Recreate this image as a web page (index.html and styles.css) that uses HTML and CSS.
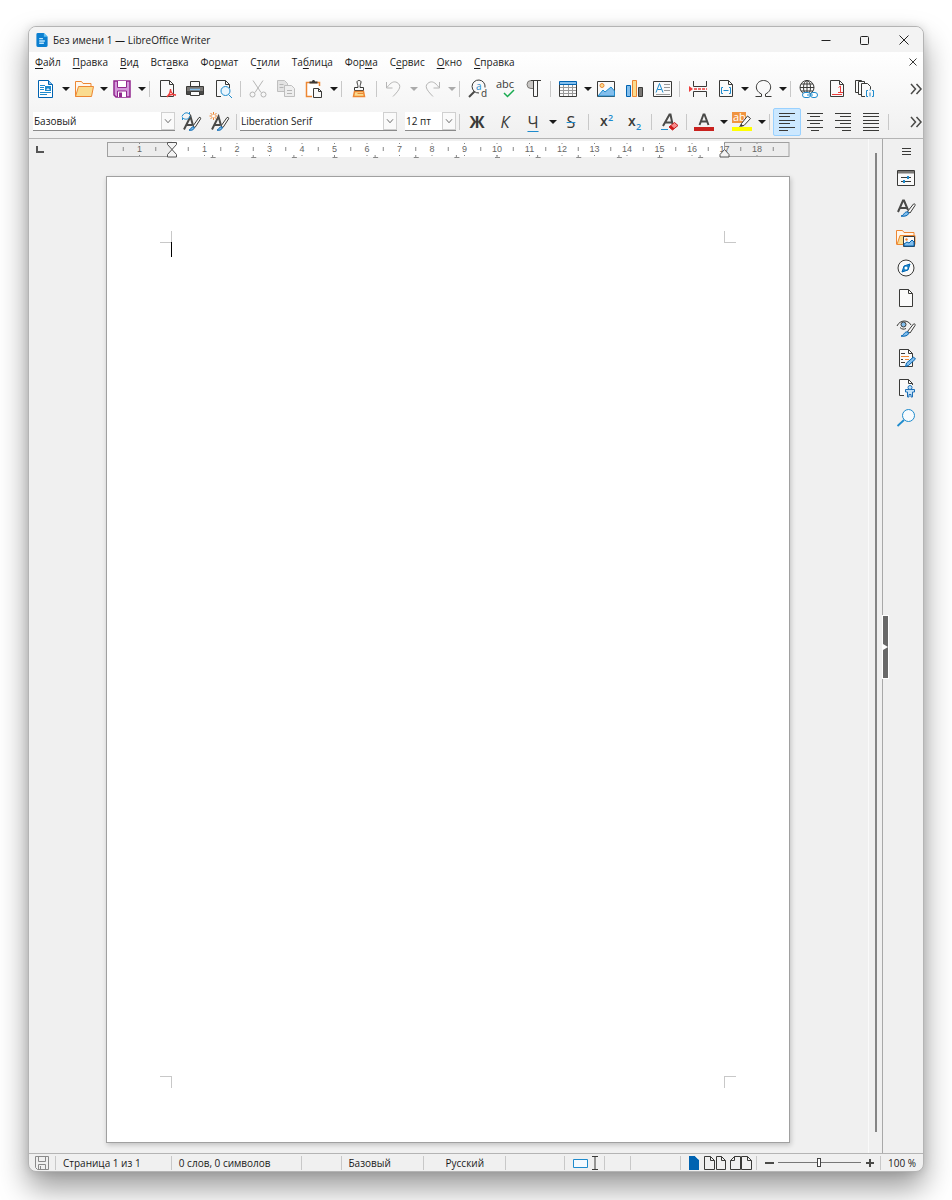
FILE: index.html
```html
<!DOCTYPE html>
<html lang="ru">

<head>
    <meta charset="UTF-8">
    <meta name="viewport" content="width=device-width, initial-scale=1.0">
    <title>Без имени 1 — LibreOffice Writer</title>
    <link rel="stylesheet" href="styles.css">
</head>

<body>
    <div class="window">
        <header class="titlebar">
            <svg class="app-icon" viewBox="0 0 12 15"><path d="M1.500 0H8l4 4v9.500a1.500 1.500 0 0 1-1.500 1.500h-9A1.500 1.500 0 0 1 0 13.500v-12A1.500 1.500 0 0 1 1.500 0z" fill="#0b7fd0"/><path d="M8 0v4h4z" fill="#5cc0f5"/><path d="M3 6h4M3 8.500h6M3 11h5" stroke="#bfe6fc" stroke-width="1.500"/></svg>
            <h1>Без имени 1 — LibreOffice Writer</h1>
            <button class="win-btn" aria-label="Свернуть"><svg viewBox="0 0 20 20"><path class="w" d="M5.500 10.500h9"/></svg></button>
            <button class="win-btn" aria-label="Развернуть"><svg viewBox="0 0 20 20"><rect class="w" x="5.500" y="6.500" width="8" height="8" rx="1"/></svg></button>
            <button class="win-btn" aria-label="Закрыть"><svg viewBox="0 0 20 20"><path class="w" d="M5.500 5.500l9 9m0-9l-9 9"/></svg></button>
        </header>

        <div class="bars">
            <nav class="menu">
                <a href="#"><u>Ф</u>айл</a>
                <a href="#"><u>П</u>равка</a>
                <a href="#"><u>В</u>ид</a>
                <a href="#">Вст<u>а</u>вка</a>
                <a href="#">Фо<u>р</u>мат</a>
                <a href="#">С<u>т</u>или</a>
                <a href="#">Та<u>б</u>лица</a>
                <a href="#">Фор<u>м</u>а</a>
                <a href="#">С<u>е</u>рвис</a>
                <a href="#"><u>О</u>кно</a>
                <a href="#"><u>С</u>правка</a>
                <button class="doc-close" aria-label="Закрыть документ"><svg viewBox="0 0 20 20"><path class="k" d="M6.500 6.500l7 7m0-7l-7 7"/></svg></button>
            </nav>

            <!-- Стандартная панель -->
            <div class="toolbar">
                <button class="tool" aria-label="Создать"><svg viewBox="0 0 20 20"><path d="M2.500 1.500h10l4 4v13h-14z" fill="#fff" stroke="#0063b1"/><path d="M12.500 1.500v4h4" fill="#83beec" stroke="#0063b1"/><path d="M4 6.500h5M4 8.500h4M4 10.500h4M4 13.500h11M4 15.500h7" stroke="#1e8bcd"/><path d="M9 7h6v5H9z" fill="#1e8bcd"/><path d="M10 11l2-2 2 2z" fill="#cfe8fa"/></svg></button><button class="arrow" aria-label="Шаблоны"></button>
                <button class="tool" aria-label="Открыть"><svg viewBox="0 0 20 20"><path d="M1.500 17.500v-15h6l1.500 2h8v3" fill="#fff7ec" stroke="#ed8733"/><path d="M1.500 17.500l3-10h15l-2 10z" fill="#fadc90" stroke="#ed8733"/></svg></button><button class="arrow" aria-label="Последние документы"></button>
                <button class="tool" aria-label="Сохранить"><svg viewBox="0 0 20 20"><path d="M2 2h16v16H4l-2-2z" fill="#d59adb" stroke="#92278f" stroke-width="1.500"/><path d="M5.500 2v6.500h9V2" fill="#fff" stroke="#92278f"/><path d="M5.500 18v-6h9v6" fill="#fff" stroke="#92278f"/><path d="M7 13.500h3V18H7z" fill="#92278f"/></svg></button><button class="arrow" aria-label="Варианты сохранения"></button>
                <span class="sep"></span>
                <button class="tool" aria-label="Экспорт в PDF"><svg viewBox="0 0 20 20"><path class="p" d="M3.500 1.500h9l4 4v12h-13z"/><path class="k" d="M12.500 1.500v4h4"/><path d="M10 18c2-2 3.500-5 3.500-7.500M13.500 10c0 3 2 5.500 5.500 6.500M10 17.500c2-2 5-2.500 9-1.500" fill="none" stroke="#ed3d3b" stroke-width="1.300"/></svg></button>
                <button class="tool" aria-label="Печать"><svg viewBox="0 0 20 20"><path class="p" d="M5.500 8v-5.500h9V8"/><path d="M1.500 7.500h17v8h-17z" fill="#797774" stroke="#3a3a38"/><path d="M2 12h16v3H2z" fill="#4a4a48"/><path d="M5 10.500h10" stroke="#83beec" stroke-width="1.500"/><path class="p" d="M5.500 12.500h9v4h-9z"/></svg></button>
                <button class="tool" aria-label="Предварительный просмотр"><svg viewBox="0 0 20 20"><path class="p" d="M8 17.500H3.500v-16h9l4 4V9"/><path class="k" d="M12.500 1.500v4h4"/><circle cx="12.500" cy="12" r="4.500" fill="#e9f5fd" stroke="#1e8bcd"/><path class="b" d="M15.500 15.500l3.500 3.500"/></svg></button>
                <span class="sep"></span>
                <button class="tool" disabled aria-label="Вырезать"><svg viewBox="0 0 20 20"><path class="k" d="M5 1.500l8 12M15 1.500l-8 12"/><circle class="k" cx="4.500" cy="15.500" r="2.500"/><circle class="k" cx="15.500" cy="15.500" r="2.500"/></svg></button>
                <button class="tool" disabled aria-label="Копировать"><svg viewBox="0 0 20 20"><path d="M1.500 1.500h7l3 3v8h-10z" fill="#bbb" stroke="#555"/><path d="M8.500 6.500h7l3 3v8h-10z" fill="#ddd" stroke="#555"/><path class="k" d="M3.500 5.500h4M3.500 8.500h4M11 11.500h5M11 14.500h5"/></svg></button>
                <button class="tool" aria-label="Вставить"><svg viewBox="0 0 20 20"><path d="M8 17.500H2.500v-14h13V7" fill="#fff" stroke="#ed8733" stroke-width="1.500"/><path d="M5.500 4.500v-2H8c0-2 3-2 3 0h2.500v2z" fill="#3a3a38"/><path class="p" d="M9.500 9.500h5l3 3v6h-8z"/><path class="k" d="M14.500 9.500v3h3"/></svg></button><button class="arrow" aria-label="Варианты вставки"></button>
                <span class="sep"></span>
                <button class="tool" aria-label="Копировать формат"><svg viewBox="0 0 20 20"><path class="p" d="M9 8.500c0-3-1-4-1-5.500 0-2 4-2 4 0 0 1.500-1 2.500-1 5.500h3.500v3h-9v-3z"/><path d="M5.500 12.500h9l1 5h-11z" fill="#fadc90" stroke="#ed8733" stroke-width="1.500"/><path d="M8.500 14.500h6" stroke="#ed8733"/></svg></button>
                <span class="sep"></span>
                <button class="tool" disabled aria-label="Отменить"><svg viewBox="0 0 20 20"><path class="k" d="M2.500 3v6h6M3 8.500C7 3 10 2 13 3.500c5 3 3 7-4 14"/></svg></button><button class="arrow" disabled aria-label="История отмены"></button>
                <button class="tool" disabled aria-label="Вернуть"><svg viewBox="0 0 20 20"><path class="k" d="M17.500 3v6h-6M17 8.500C13 3 10 2 7 3.500c-5 3-3 7 4 14"/></svg></button><button class="arrow" disabled aria-label="История возврата"></button>
                <span class="sep"></span>
                <button class="tool" aria-label="Найти и заменить"><svg viewBox="0 0 20 20"><path class="k" d="M18 8.500A6.500 6.500 0 1 0 12 14"/><path class="k2" d="M7.500 12.500l-5.500 5.500"/><text x="9" y="11" class="g blue" font-size="10">a</text><text x="14" y="18" class="g" font-size="10">d</text></svg></button>
                <button class="tool" aria-label="Орфография"><svg viewBox="0 0 20 20"><text x="1" y="9" class="g" font-size="11">abc</text><path d="M9 14l3.500 3.500L19 11" fill="none" stroke="#18ab50" stroke-width="1.500"/></svg></button>
                <button class="tool" aria-label="Непечатаемые символы"><svg viewBox="0 0 20 20"><path d="M10.500 1.500H8a4 4 0 0 0 0 8h2.500z" fill="#c8c6c4" stroke="#797774"/><path class="k" d="M8 1.500h10M10.500 1.500v16M14.500 1.500v16M10.500 17.500h4"/></svg></button>
                <span class="sep"></span>
                <button class="tool" aria-label="Вставить таблицу"><svg viewBox="0 0 20 20"><path fill="#fafafa" d="M1 2h18v16H1z"/><path class="t" d="M2 8.500h16M2 11.500h16M2 14.500h16M5.500 5v12M10.500 5v12M14.500 5v12"/><path class="k" d="M1.500 5v12.500h17V5"/><path d="M1.500 2.500h17v3h-17z" fill="#83beec" stroke="#0063b1"/></svg></button><button class="arrow" aria-label="Размер таблицы"></button>
                <button class="tool" aria-label="Изображение"><svg viewBox="0 0 20 20"><path class="p" d="M1.500 2.500h17v15h-17z"/><circle cx="6" cy="6.500" r="2" fill="#fadc90" stroke="#ed8733"/><path d="M2 17l5-6 2 2 6-5 3.500 4v5H2z" fill="#83beec" stroke="#1e8bcd"/></svg></button>
                <button class="tool" aria-label="Диаграмма"><svg viewBox="0 0 20 20"><path d="M2.500 6.500h4v11h-4z" fill="#83beec" stroke="#0063b1"/><path d="M8.500 1.500h4v16h-4z" fill="#fadc90" stroke="#ed8733"/><path d="M14.500 8.500h4v9h-4z" fill="#797774" stroke="#3a3a38"/></svg></button>
                <button class="tool" aria-label="Врезка"><svg viewBox="0 0 20 20"><path class="p" d="M1.500 2.500h18v15h-18z"/><path class="b" d="M4 13.500l3.500-9 3.500 9M5.500 10.500h4"/><path class="t" d="M12 5.500h6M12 8.500h6M12 11.500h6M4 15.500h14"/></svg></button>
                <span class="sep"></span>
                <button class="tool" aria-label="Разрыв страницы"><svg viewBox="0 0 20 20"><path class="k" d="M6.500 2v5.500h13V2M6.500 18v-5.500h13V18"/><path d="M7 10h13" stroke="#ed3d3b" stroke-width="1.500" stroke-dasharray="3 1"/><path d="M2 7l4 3-4 3z" fill="#ed3d3b"/></svg></button>
                <button class="tool" aria-label="Поле"><svg viewBox="0 0 20 20"><path class="p" d="M4.500 1.500h9l4 4v12h-13z"/><path class="k" d="M13.500 1.500v4h4"/><path class="b" d="M8 8.500H6.500v6H8M14 8.500h1.500v6H14M8.500 11.500h5"/></svg></button><button class="arrow" aria-label="Виды полей"></button>
                <button class="tool" aria-label="Специальные символы"><svg viewBox="0 0 20 20"><path class="k" d="M2.500 17.500h6v-2.500C0 11 3 1.500 10.500 1.500S21 11 12.500 15v2.500h6"/></svg></button><button class="arrow" aria-label="Избранные символы"></button>
                <span class="sep"></span>
                <button class="tool" aria-label="Гиперссылка"><svg viewBox="0 0 20 20"><circle class="p" cx="9" cy="8.500" r="7"/><ellipse class="k" cx="9" cy="8.500" rx="3.500" ry="7"/><path class="k" d="M9 1.500v14M2 8.500h14M3 5h12M3 12h12"/><rect x="4.500" y="13.500" width="8" height="5" rx="2.500" fill="#fff" stroke="#1e8bcd"/><rect x="12.500" y="13.500" width="7" height="5" rx="2.500" fill="#fff" stroke="#1e8bcd"/><path class="b" d="M9 16h6"/></svg></button>
                <button class="tool" aria-label="Сноска"><svg viewBox="0 0 20 20"><path class="p" d="M4.500 1.500h9l4 4v12h-13z"/><path class="k" d="M13.500 1.500v4h4"/><path d="M6 15.500h10M14.500 7v6.500M12.500 8.500l2-1.500M12 13.500h5" fill="none" stroke="#ed3d3b"/></svg></button>
                <button class="tool" aria-label="Указатель"><svg viewBox="0 0 20 20"><path class="p" d="M1.500 13.500v-12h6v12z"/><path class="p" d="M4.500 15.500v-13h6v13z"/><path class="p" d="M11 17.500H7.500v-13h6l3 3v3"/><path class="b" d="M14 11.500h-1.500v6H14M18 11.500h1.500v6H18M16 13.500v4M16 10.500v1"/></svg></button>
                <button class="more" aria-label="Ещё"><svg viewBox="3 3 14 14"><path class="k2" d="M5 5l4.500 5L5 15M10.500 5l4.500 5-4.500 5"/></svg></button>
            </div>

            <!-- Панель форматирования -->
            <div class="toolbar format">
                <div class="combo combo-style">
                    <select aria-label="Стиль абзаца"><option>Базовый</option></select>
                    <svg viewBox="0 0 14 18"><path d="M3.500 7l3.500 4 3.500-4"/></svg>
                </div>
                <button class="tool" aria-label="Обновить стиль"><svg viewBox="0 0 20 20"><path class="k2" d="M3 17.500l6.500-13 2.500 9M5.500 13h6"/><path class="p" d="M12 14l6-8.500c1.500-.5 2 .5 1.500 1.500L14 15.500z"/><path d="M8 18c2 0 2-4 5-3 1 2-2 4-5 3z" fill="#83beec" stroke="#0063b1"/><path class="b" d="M1 4.500C3 0 7 0 8.500 2.500V0M9 4c-1 4-6 4-7.500 1.500V8"/></svg></button>
                <button class="tool" aria-label="Создать стиль"><svg viewBox="0 0 20 20"><path class="k2" d="M3 17.500l6.500-13 2.500 9M5.500 13h6"/><path class="p" d="M12 14l6-8.500c1.500-.5 2 .5 1.500 1.500L14 15.500z"/><path d="M8 18c2 0 2-4 5-3 1 2-2 4-5 3z" fill="#83beec" stroke="#0063b1"/><path d="M4.500 0v8M.5 4h8M1.500 1l6 6M7.500 1l-6 6" stroke="#ed8733"/><circle cx="4.500" cy="4" r="1.500" fill="#fff"/></svg></button>
                <span class="sep"></span>
                <div class="combo combo-font">
                    <select aria-label="Шрифт"><option>Liberation Serif</option></select>
                    <svg viewBox="0 0 14 18"><path d="M3.500 7l3.500 4 3.500-4"/></svg>
                </div>
                <div class="combo combo-size">
                    <select aria-label="Кегль"><option>12 пт</option></select>
                    <svg viewBox="0 0 14 18"><path d="M3.500 7l3.500 4 3.500-4"/></svg>
                </div>
                <span class="sep"></span>
                <button class="tool letter bold">Ж</button>
                <button class="tool letter italic">К</button>
                <button class="tool letter under">Ч</button><button class="arrow" aria-label="Вид подчёркивания"></button>
                <button class="tool letter strike">S</button>
                <span class="sep"></span>
                <button class="tool" aria-label="Верхний индекс"><svg viewBox="0 0 20 20"><text x="4" y="14" class="g semi" font-size="14">x</text><text x="12" y="9" class="g blue semi" font-size="9">2</text></svg></button>
                <button class="tool" aria-label="Нижний индекс"><svg viewBox="0 0 20 20"><text x="4" y="14" class="g semi" font-size="14">x</text><text x="12" y="18" class="g blue semi" font-size="9">2</text></svg></button>
                <span class="sep"></span>
                <button class="tool" aria-label="Очистить форматирование"><svg viewBox="0 0 20 20"><path class="k2" d="M4 14l6.500-11.500h1L13.500 12M6.500 10.500h6"/><path class="b" d="M2 17.500h7"/><path d="M10 15l5.500-4.500 3.500 3L13.500 18z" fill="#f78d8c" stroke="#cb1a1a"/><path d="M10 15l2-1.500 3.500 3L13.500 18z" fill="#cb1a1a"/></svg></button>
                <span class="sep"></span>
                <button class="tool" aria-label="Цвет шрифта"><svg viewBox="0 0 20 20"><path class="k2" d="M5.500 13L9.500 2.500h1l4 10.500M7 9.500h6"/><path d="M0 15h20v4H0z" fill="#c9211e"/></svg></button><button class="arrow" aria-label="Палитра шрифта"></button>
                <button class="tool" aria-label="Цвет выделения"><svg viewBox="0 0 20 20"><path d="M0 0h14v11H0z" fill="#f09440"/><text x="1" y="9" class="g white" font-size="11">ab</text><path class="p" d="M9.500 11.500l6-7.500 3 2.500-6.500 7-3 .5z"/><path d="M7 15l2-3 2.500 2z" fill="#3a3a38"/><path d="M0 15h20v4H0z" fill="#ff0"/></svg></button><button class="arrow" aria-label="Палитра выделения"></button>
                <span class="sep"></span>
                <button class="tool active" aria-label="По левому краю"><svg viewBox="0 0 20 20"><path class="k" d="M2 1.500h16M2 4.500h11M2 8.500h16M2 11.500h11M2 15.500h16M2 18.500h9"/></svg></button>
                <button class="tool" aria-label="По центру"><svg viewBox="0 0 20 20"><path class="k" d="M2 1.500h16M5 4.500h10M2 8.500h16M5 11.500h10M2 15.500h16M6 18.500h8"/></svg></button>
                <button class="tool" aria-label="По правому краю"><svg viewBox="0 0 20 20"><path class="k" d="M2 1.500h16M7 4.500h11M2 8.500h16M7 11.500h11M2 15.500h16M9 18.500h9"/></svg></button>
                <button class="tool" aria-label="По ширине"><svg viewBox="0 0 20 20"><path class="k" d="M2 1.500h16M2 4.500h16M2 8.500h16M2 11.500h16M2 15.500h16M2 18.500h16"/></svg></button>
                <span class="sep"></span>
                <button class="more" aria-label="Ещё"><svg viewBox="3 3 14 14"><path class="k2" d="M5 5l4.500 5L5 15M10.500 5l4.500 5-4.500 5"/></svg></button>
            </div>
        </div>

        <main class="workspace">
            <div class="canvas">
                <div class="ruler-row">
                    <button class="tab-kind" aria-label="Табуляция"></button>
                    <svg class="ruler" id="ruler" viewBox="0 0 683 17"></svg>
                </div>
                <div class="sheet">
                    <span class="corner tl"><i class="caret"></i></span>
                    <span class="corner tr"></span>
                    <span class="corner bl"></span>
                    <span class="corner br"></span>
                </div>
            </div>
            <div class="scrollbar"></div>
            <aside class="sidebar">
                <button class="fold" aria-label="Скрыть боковую панель"></button>
                <button class="side-menu" aria-label="Настройки боковой панели"><svg viewBox="0 0 20 20"><path class="k" d="M6 7.500h9M6 10.500h9M6 13.500h9"/></svg></button>
                <button class="side" aria-label="Свойства"><svg viewBox="0 0 20 20"><path class="p" d="M1.500 2.500h17v15h-17z"/><path d="M2 3h16v2.500H2z" fill="#797774"/><path class="k" d="M5 9.500h10M5 13.500h10"/><path d="M11 8h2v3h-2zM7 12h2v3H7z" fill="#1e8bcd"/></svg></button>
                <button class="side" aria-label="Стили"><svg viewBox="0 0 20 20"><path class="k2" d="M2 14L7 2.500h1L12 12M4 10h7"/><path class="p" d="M11.500 13.500l6-7.500c1.500-.5 2 .5 1.500 1.500L14 15z"/><path d="M5 18c3 0 3-5 7-4 2 3-3 5-7 4z" fill="#83beec" stroke="#0063b1"/></svg></button>
                <button class="side" aria-label="Галерея"><svg viewBox="0 0 20 20"><path d="M.5 16.500v-14h6l1.500 2h10v4" fill="#fff7ec" stroke="#ed8733"/><path d="M1 16.500l3-9h15v9z" fill="#fadc90" stroke="#ed8733"/><path class="p" d="M7.500 8.500h11v10h-11z"/><circle cx="10.500" cy="11.500" r="1.200" fill="#ed8733"/><path d="M8 18v-2l3-2 2 1 3-3 2 2v4z" fill="#83beec" stroke="#0063b1"/></svg></button>
                <button class="side" aria-label="Навигатор"><svg viewBox="0 0 20 20"><circle class="p" cx="10" cy="10" r="8"/><path d="M14 6l-2 6-6 2 2-6z" fill="#1e8bcd" stroke="#0063b1"/><circle cx="10" cy="10" r="1.500" fill="#fff"/></svg></button>
                <button class="side" aria-label="Страница"><svg viewBox="0 0 20 20"><path class="p" d="M3.500 1.500h9l4 4v13h-13z"/><path class="k" d="M12.500 1.500v4h4"/></svg></button>
                <button class="side" aria-label="Инспектор стилей"><svg viewBox="0 0 20 20"><path class="k" d="M1 8C4 1.500 12 1.500 15 7M4 9.500c2 2 4 2 6 1"/><circle cx="7.500" cy="6.500" r="2.500" fill="#83beec" stroke="#3a3a38"/><path class="p" d="M11.500 13.500l6-7.500c1.500-.5 2 .5 1.500 1.500L14 15z"/><path d="M5 18c3 0 3-5 7-4 2 3-3 5-7 4z" fill="#83beec" stroke="#0063b1"/></svg></button>
                <button class="side" aria-label="Управление изменениями"><svg viewBox="0 0 20 20"><path class="p" d="M3.500 1.500h9l4 4v13h-13z"/><path class="k" d="M12.500 1.500v4h4M5 5.500h4M5 11.500h2M5 14.500h4"/><path d="M5 8.500h8M9 11.500h4" stroke="#ed8733"/><path d="M9.500 18.500l1-3.500 7-6 2 2-7 6.500z" fill="#83beec" stroke="#0063b1"/></svg></button>
                <button class="side" aria-label="Доступность"><svg viewBox="0 0 20 20"><path class="p" d="M8 17.500H3.500v-16h9l4 4V7"/><path class="k" d="M12.500 1.500v4h4"/><path d="M9.500 11.500h9v2.500h-2v5H15v-2.500h-2V19h-1.500v-5h-2z" fill="#c5e2f8" stroke="#1e70b8"/><circle cx="14" cy="9.500" r="2" fill="#c5e2f8" stroke="#1e70b8"/></svg></button>
                <button class="side" aria-label="Поиск"><svg viewBox="0 0 20 20"><circle cx="12.500" cy="7.500" r="6" fill="#f7fbfe" stroke="#1e8bcd"/><path d="M8 12l-6.500 6" stroke="#1e8bcd" stroke-width="1.800"/></svg></button>
            </aside>
        </main>

        <footer class="status">
            <button class="mid" aria-label="Документ сохранён"><svg viewBox="0 0 16 16"><path d="M1.500 1.500h13v13h-11l-2-2zM4.500 1.500v5h7v-5M4.500 14.500v-5h7v5M6.500 11v3" fill="none" stroke="#8a8a8a"/></svg></button>
            <span>Страница 1 из 1</span>
            <span>0 слов, 0 символов</span>
            <span></span>
            <span>Базовый</span>
            <span class="mid">Русский</span>
            <span></span>
            <button class="mid" aria-label="Режим выделения"><svg class="wide" viewBox="0 0 28 16"><path d="M2.500 4.500h14v8h-14z" fill="#f4faff" stroke="#1e8bcd"/><path class="k" d="M21 1.500h6M21 14.500h6M24 1.500v13"/></svg></button>
            <span></span>
            <span></span>
            <span class="views">
                <button aria-label="Одна страница"><svg viewBox="0 0 12 16"><path d="M1 1h6l4 4v10H1z" fill="#0063b1"/><path d="M7.500 1l3.500 3.500" stroke="#fff"/></svg></button>
                <button aria-label="Несколько страниц"><svg class="pair" viewBox="0 0 22 16"><path class="k" d="M.5 1.500h6l4 4v9H.5zM6.500 1.500v4h4M12.500 1.500h5l4 4v9h-9zM17.500 1.500v4h4"/></svg></button>
                <button aria-label="Книжный вид"><svg class="pair" viewBox="0 0 22 16"><path class="k" d="M10.500 1.500h-6l-4 4v9h10zM4.500 1.500v4h-4M11.500 1.500h6l4 4v9h-10zM17.500 1.500v4h4"/></svg></button>
            </span>
            <span class="zoom">
                <button aria-label="Уменьшить"><svg viewBox="0 0 10 10"><path class="k2" d="M1 5h9"/></svg></button>
                <input type="range" min="0" max="100" value="49" aria-label="Масштаб">
                <button aria-label="Увеличить"><svg viewBox="0 0 10 10"><path class="k2" d="M1 5h8M5 1v8"/></svg></button>
            </span>
            <span>100 %</span>
        </footer>
    </div>

    <script>
        // Линейка: 1 см = 32.5 единицы, нулевая отметка на левом поле
        const cm = 32.5;
        const zero = 65;
        const end = zero + 17 * cm;
        let svg = `<rect x="${zero}" y="0" width="${17 * cm}" height="16" fill="#fff"/>
            <rect class="edge" x="0.5" y="1.5" width="${zero - 0.5}" height="14"/>
            <rect class="edge" x="${end}" y="1.5" width="${682 - end}" height="14"/>`;

        for (let n = -3; n <= 37; n++) {
            const x = zero + n * cm / 2;
            if (n % 2) {
                svg += `<path class="half" d="M${x} 6v4"/>`;
            } else if (n !== 0) {
                svg += `<text x="${x}" y="11">${Math.abs(n / 2)}</text>
                    <path class="half" d="M${x} 2v1M${x} 14v1"/>`;
            }
        }

        // Позиции табуляции по умолчанию
        for (let x = zero + cm * 1.25; x < end - 1; x += cm * 1.25) {
            svg += `<path class="stop" d="M${x - 2} 16.5h5M${x} 14v2"/>`;
        }

        svg += `<path class="indent" d="M${zero - 4.5} 1.5h9v2l-4.5 5-4.5-5zM${zero - 4.5} 16v-2.5l4.5-5 4.5 5V16z"/>
            <path class="indent" d="M${end - 4.5} 16v-2.5l4.5-5 4.5 5V16z"/>`;
        document.getElementById("ruler").innerHTML = svg;
    </script>
</body>

</html>
```
FILE: styles.css
```css
* {
    box-sizing: border-box;
}

body {
    display: flex;
    min-height: 100vh;
    margin: 0;
    padding: 26px 28px 28px;
    background: #fff;
    color: #1a1a1a;
    font-family: "Open Sans", "Noto Sans", sans-serif;
    font-size: 10px;
    line-height: 14px;
}

button {
    padding: 0;
    border: none;
    background: none;
    color: inherit;
    font: inherit;
}

svg {
    display: block;
    overflow: visible;
    width: 20px;
    height: 20px;
}

/* Штрихи значков */
.k,
.k2,
.p,
.b,
.t,
.w {
    fill: none;
    stroke: #3a3a38;
}

.k2 {
    stroke-width: 2;
    stroke: #4a4a48;
}

.p {
    fill: #fafafa;
}

.b {
    stroke: #1e8bcd;
}

.w {
    stroke: #222;
}

.t {
    stroke: #999;
}

.g {
    fill: #3a3a38;
}

.g.blue {
    fill: #1e8bcd;
}

.g.white {
    fill: #fff;
}

.semi {
    font-weight: 600;
}

.window {
    display: flex;
    flex: 1;
    flex-direction: column;
    overflow: hidden;
    border: 1px solid #b4b4b4;
    border-radius: 8px;
    background: #f0f0f0;
    box-shadow: 0 16px 30px rgba(0, 0, 0, 0.4), 0 0 10px rgba(0, 0, 0, 0.12);
}

.titlebar {
    display: flex;
    align-items: center;
    height: 25px;
    padding-left: 7px;
    background: #f3f3f3;
}

.app-icon {
    width: 12px;
    height: 14px;
}

h1 {
    flex: 1;
    margin: 0 0 0 5px;
    font-size: 10px;
    font-weight: normal;
    line-height: 14px;
}

.win-btn {
    display: flex;
    justify-content: center;
    width: 39px;
}

.bars {
    border-bottom: 1px solid #b4b4b4;
    background: linear-gradient(#fff, #f0f0f0);
}

.menu {
    display: flex;
    align-items: center;
    height: 20px;
    padding-left: 6px;
    gap: 12px;
}

.menu a {
    color: #1a1a1a;
    text-decoration: none;
}

.menu u {
    text-underline-offset: 2px;
}

.doc-close {
    margin-left: auto;
}

.toolbar {
    display: flex;
    align-items: center;
    height: 33px;
    padding-left: 3px;
}

.format {
    padding-left: 4px;
}

.tool {
    display: flex;
    flex: none;
    align-items: center;
    justify-content: center;
    width: 28px;
    height: 28px;
}

.tool:disabled,
.arrow:disabled {
    opacity: 0.35;
}

.tool.active {
    border: 1px solid #99d1ff;
    border-radius: 2px;
    background: #cce8ff;
}

.arrow {
    display: flex;
    flex: none;
    align-items: center;
    justify-content: flex-end;
    width: 10px;
    height: 28px;
}

.arrow::after {
    border: 4px solid transparent;
    border-top-color: #1a1a1a;
    border-bottom: 0;
    content: "";
}

.sep {
    flex: none;
    width: 1px;
    height: 16px;
    margin: 0 3px;
    background: #c8c8c8;
}

.more {
    margin-left: auto;
}

.more svg {
    width: 14px;
    height: 14px;
}

.more path {
    stroke-width: 1.5;
}

.letter {
    color: #3a3a38;
    font-size: 16px;
    line-height: 20px;
}

.bold {
    font-weight: bold;
}

.italic {
    font-style: italic;
}

.under {
    text-decoration: underline #1e8bcd 1px;
    text-underline-offset: 3px;
}

.strike {
    text-decoration: line-through #1e8bcd 1px;
}

.combo {
    display: flex;
    height: 19px;
    border-bottom: 1px solid #8a8a8a;
    background: #fff;
}

.combo select {
    flex: 1;
    min-width: 0;
    padding: 0 1px;
    border: none;
    background: none;
    color: #1a1a1a;
    font: inherit;
    appearance: none;
}

.combo svg {
    width: 14px;
    height: 18px;
    border: 1px solid #d0d0d0;
    background: #fafafa;
    fill: none;
    stroke: #555;
}

.combo-style {
    width: 142px;
    margin-right: 2px;
}

.combo-font {
    width: 157px;
    margin-right: 8px;
}

.combo-size {
    width: 51px;
}

.workspace {
    display: flex;
    flex: 1;
}

.canvas {
    display: flex;
    flex: 1;
    flex-direction: column;
    padding: 2px 78px 10px 0;
    gap: 18px;
}

.ruler-row {
    display: flex;
    align-items: center;
}

.tab-kind {
    width: 78px;
    height: 16px;
}

.tab-kind::before {
    display: block;
    width: 6px;
    height: 5px;
    margin-left: 7px;
    border: solid #555;
    border-width: 0 0 2px 2px;
    content: "";
}

.ruler {
    flex: 1;
    height: auto;
}

.ruler text {
    fill: #666;
    font-family: "Liberation Sans", Arial, sans-serif;
    font-size: 9px;
    text-anchor: middle;
}

.edge {
    fill: #ededed;
    stroke: #a0a0a0;
}

.half,
.stop {
    stroke: #888;
}

.indent {
    fill: #f4f4f4;
    stroke: #555;
}

/* Лист документа и метки полей */
.sheet {
    display: grid;
    flex: 1;
    grid-template-columns: 12px 12px;
    grid-template-rows: 12px 12px;
    align-content: space-between;
    justify-content: space-between;
    margin-left: 77px;
    padding: 54px 53px;
    border: 1px solid #a0a0a0;
    background: #fff;
    box-shadow: 1px 2px 5px rgba(0, 0, 0, 0.2);
}

.corner {
    position: relative;
    border: 0 solid #c8c8c8;
}

.tl {
    border-width: 0 1px 1px 0;
}

.tr {
    border-width: 0 0 1px 1px;
}

.bl {
    border-width: 1px 1px 0 0;
}

.br {
    border-width: 1px 0 0 1px;
}

.caret {
    position: absolute;
    top: 100%;
    left: 100%;
    width: 1px;
    height: 15px;
    background: #000;
}

.scrollbar {
    width: 14px;
    padding: 14px 5px 21px 6px;
    border-left: 1px solid #fafafa;
}

.scrollbar::before {
    display: block;
    width: 2px;
    height: 100%;
    background: #858585;
    content: "";
}

.sidebar {
    position: relative;
    display: flex;
    flex-direction: column;
    align-items: center;
    width: 41px;
    padding-left: 6px;
    border-left: 1px solid #a8a8a8;
}

.side-menu {
    height: 24px;
}

.side {
    display: flex;
    align-items: center;
    height: 30px;
}

.fold {
    position: absolute;
    top: 47%;
    left: 0;
    width: 5px;
    height: 62px;
    outline: 1px solid #fff;
    background: #696969;
}

.fold::after {
    display: block;
    width: 0;
    border: 3px solid transparent;
    border-right: 0;
    border-left: 5px solid #fff;
    content: "";
}

.status {
    display: grid;
    grid-template-columns: 27px 116fr 130fr 40fr 83fr 82fr 59fr 40px 26fr 50fr 76px 124px 42px;
    align-items: center;
    height: 18px;
    border-top: 1px solid #b4b4b4;
}

.status > * {
    display: flex;
    align-items: center;
    height: 14px;
    padding-left: 7px;
    border-right: 1px solid #c8c8c8;
    white-space: nowrap;
}

.status > :last-child {
    border: none;
}

.status .mid {
    justify-content: center;
    padding: 0;
}

.status svg {
    width: 16px;
    height: 16px;
}

.status .wide {
    width: 28px;
}

.views {
    gap: 4px;
}

.views svg {
    width: 12px;
}

.views .pair {
    width: 22px;
}

.status .zoom {
    padding-right: 5px;
    gap: 4px;
}

.zoom svg {
    width: 10px;
    height: 10px;
}

.zoom input {
    flex: 1;
    min-width: 0;
    height: 12px;
    margin: 0;
    background: linear-gradient(#777, #777) center / 100% 1px no-repeat;
    appearance: none;
}

.zoom input::-webkit-slider-thumb {
    width: 4px;
    height: 9px;
    border: 1px solid #444;
    background: #fff;
    appearance: none;
}
```
